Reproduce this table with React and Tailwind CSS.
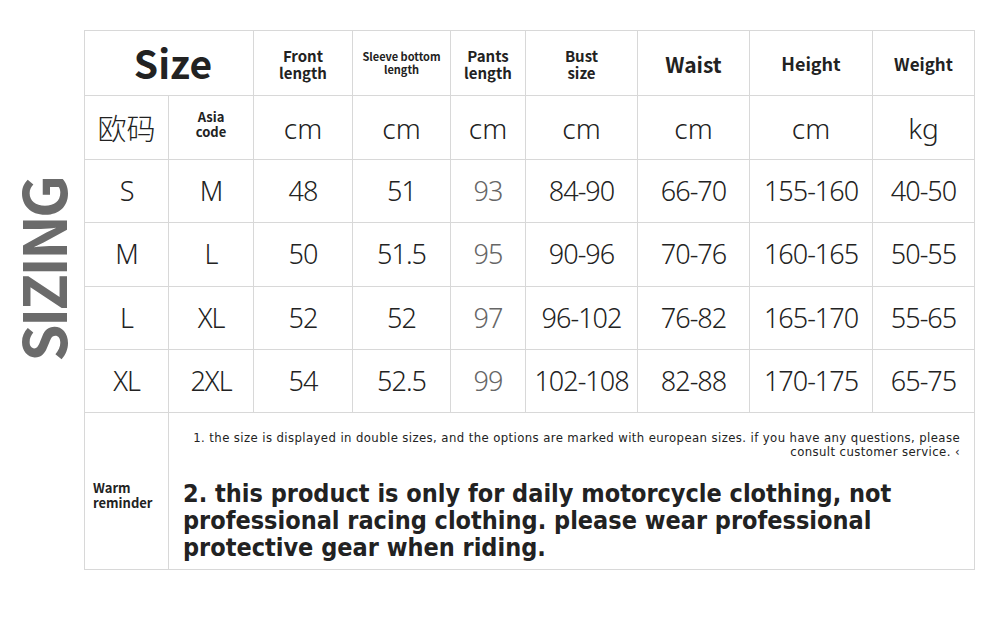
import React from "react";

const rows = [
  ["S", "M", "48", "51", "93", "84-90", "66-70", "155-160", "40-50"],
  ["M", "L", "50", "51.5", "95", "90-96", "70-76", "160-165", "50-55"],
  ["L", "XL", "52", "52", "97", "96-102", "76-82", "165-170", "55-65"],
  ["XL", "2XL", "54", "52.5", "99", "102-108", "82-88", "170-175", "65-75"],
];

const cell = "bg-white flex items-center justify-center text-center";
const thin = { fontFamily: '"Noto Sans", "Noto Sans CJK SC", sans-serif' };

const App = () => {
  return (
    <div
      className="w-[1000px] h-[622px] bg-white flex items-start text-[#222]"
      style={{ fontFamily: '"Noto Sans CJK SC", "Noto Sans", sans-serif' }}
    >
      {/* Left: vertical SIZING label */}
      <div className="w-[84px] pt-[178px] flex items-start justify-center">
        <div className="[writing-mode:vertical-rl] rotate-180 text-[60px] leading-[60px] font-bold tracking-[-3px] text-[#6b6b6b] pl-[2px]">
          SIZING
        </div>
      </div>

      {/* Right: size table */}
      <div className="pt-[30px]">
        <div className="grid grid-cols-[83px_84px_98px_97px_74px_111px_111px_122px_101px] grid-rows-[64px_63px_62px_63px_62px_62px_156px] gap-px bg-[#d8d8d8] border border-[#d8d8d8]">
          {/* Header row */}
          <div className={`${cell} col-span-2 text-[39px] font-bold pb-[2px] pl-[8px]`}>Size</div>
          <div className={`${cell} text-[15px] font-bold leading-[17px] pt-[2px]`}>
            Front
            <br />
            length
          </div>
          <div className={`${cell} text-[11px] font-bold leading-[13px]`}>
            Sleeve bottom
            <br />
            length
          </div>
          <div className={`${cell} text-[15px] font-bold leading-[17px] pt-[2px]`}>
            Pants
            <br />
            length
          </div>
          <div className={`${cell} text-[15px] font-bold leading-[17px] pt-[2px]`}>
            Bust
            <br />
            size
          </div>
          <div className={`${cell} text-[21px] font-bold pt-[4px]`}>Waist</div>
          <div className={`${cell} text-[18px] font-bold`}>Height</div>
          <div className={`${cell} text-[17px] font-bold pt-[2px]`}>Weight</div>

          {/* Units row */}
          <div className={`${cell} text-[29px] font-light`}>欧码</div>
          <div className={`${cell} text-[13px] font-bold leading-[15px] pb-[8px]`}>
            Asia
            <br />
            code
          </div>
          {["cm", "cm", "cm", "cm", "cm", "cm"].map((u, i) => (
            <div key={i} className={`${cell} text-[28px] font-light`} style={thin}>
              {u}
            </div>
          ))}
          <div className={`${cell} text-[28px] font-light`} style={thin}>
            kg
          </div>

          {/* Data rows */}
          {rows.map((r, ri) =>
            r.map((v, ci) => (
              <div
                key={`${ri}-${ci}`}
                className={`${cell} text-[27px] font-light tracking-[-1px] ${ci === 4 ? "text-[#666]" : ""}`}
                style={thin}
              >
                {v}
              </div>
            ))
          )}

          {/* Warm reminder */}
          <div className="bg-white flex items-center pl-[8px] pt-[8px] text-[13px] font-bold leading-[15px]">
            Warm
            <br />
            reminder
          </div>
          <div
            className="bg-white col-span-8 flex flex-col pt-[18px] pl-[14px] pr-[14px]"
            style={{ fontFamily: '"Liberation Sans Narrow", "DejaVu Sans Condensed", sans-serif' }}
          >
            <p className="text-[13px] leading-[14px] tracking-[0.4px] text-right whitespace-nowrap">
              1. the size is displayed in double sizes, and the options are marked with european sizes. if you have any questions, please
              <br />
              consult customer service. ‹
            </p>
            <p className="mt-[21px] text-[25px] font-bold leading-[27px]">
              2. this product is only for daily motorcycle clothing, not professional racing clothing. please wear professional protective gear when riding.
            </p>
          </div>
        </div>
      </div>
    </div>
  );
};

export default App;
